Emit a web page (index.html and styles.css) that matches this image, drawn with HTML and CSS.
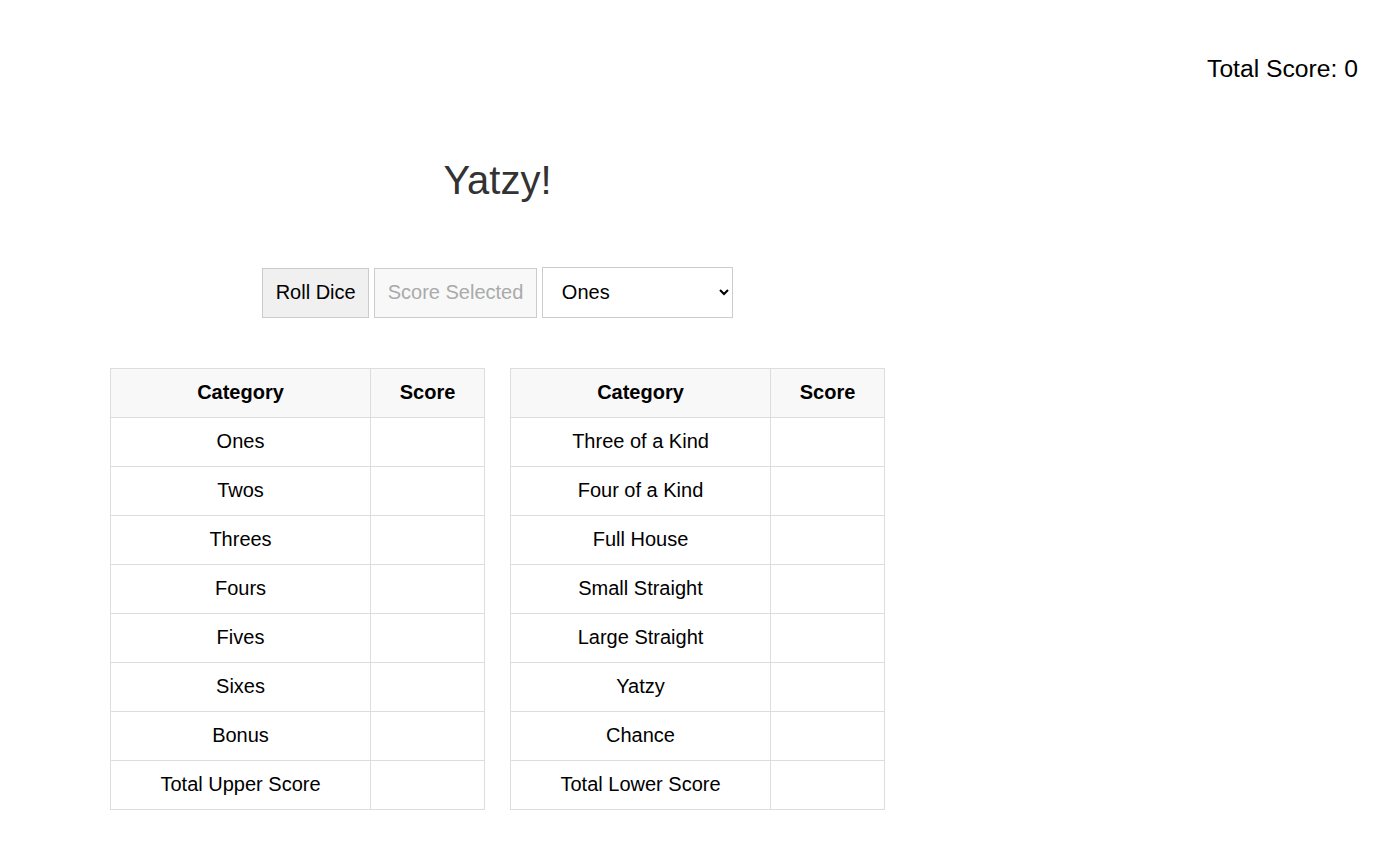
FILE: index.html
```html
<!DOCTYPE html>
<html>
<head>
<meta charset="utf-8">
<link rel="stylesheet" href="styles.css">
</head>
<body>
<div class="page">
  <main class="main">
    <h1 class="title">Yatzy!</h1>
    <div class="controls">
      <button class="btn">Roll Dice</button>
      <button class="btn" disabled>Score Selected</button>
      <select class="pick">
        <option>Ones</option>
        <option>Twos</option>
        <option>Threes</option>
        <option>Fours</option>
        <option>Fives</option>
        <option>Sixes</option>
      </select>
    </div>
    <div class="tables">
      <table class="score">
        <thead><tr><th class="cat">Category</th><th class="val">Score</th></tr></thead>
        <tbody>
          <tr><td>Ones</td><td></td></tr>
          <tr><td>Twos</td><td></td></tr>
          <tr><td>Threes</td><td></td></tr>
          <tr><td>Fours</td><td></td></tr>
          <tr><td>Fives</td><td></td></tr>
          <tr><td>Sixes</td><td></td></tr>
          <tr><td>Bonus</td><td></td></tr>
          <tr><td>Total Upper Score</td><td></td></tr>
        </tbody>
      </table>
      <table class="score">
        <thead><tr><th class="cat">Category</th><th class="val">Score</th></tr></thead>
        <tbody>
          <tr><td>Three of a Kind</td><td></td></tr>
          <tr><td>Four of a Kind</td><td></td></tr>
          <tr><td>Full House</td><td></td></tr>
          <tr><td>Small Straight</td><td></td></tr>
          <tr><td>Large Straight</td><td></td></tr>
          <tr><td>Yatzy</td><td></td></tr>
          <tr><td>Chance</td><td></td></tr>
          <tr><td>Total Lower Score</td><td></td></tr>
        </tbody>
      </table>
    </div>
  </main>
  <aside class="side">Total Score: 0</aside>
</div>
</body>
</html>
```
FILE: styles.css
```css
html, body {
  margin: 0;
  padding: 0;
  background: #fff;
  font-family: "Liberation Sans", Arial, sans-serif;
  color: #000;
}
.page {
  display: flex;
}
.main {
  width: 995px;
  display: flex;
  flex-direction: column;
  align-items: center;
}
.title {
  margin: 155px 0 0;
  font-size: 40px;
  font-weight: normal;
  color: #333;
  line-height: 50px;
}
.controls {
  display: flex;
  align-items: center;
  gap: 5px;
  margin-top: 62px;
}
.btn {
  font-family: inherit;
  font-size: 20px;
  height: 50px;
  padding: 0 12.5px;
  border: 1px solid #ccc;
  background: #f0f0f0;
  color: #000;
  border-radius: 0;
}
.btn:disabled {
  background: #f8f8f8;
  color: #aaa;
  border-color: #ccc;
}
.pick {
  font-family: inherit;
  font-size: 20px;
  width: 191px;
  height: 51px;
  padding: 0 15px 1px;
  border: 1px solid #ccc;
  border-radius: 0;
  background: #fff;
  color: #000;
}
.tables {
  display: flex;
  gap: 25px;
  margin-top: 50px;
}
.score {
  border-collapse: collapse;
  width: 375px;
  font-size: 20px;
}
.score th, .score td {
  border: 1px solid #ddd;
  height: 46px;
  padding: 0 0 2px;
  text-align: center;
}
.score th {
  background: #f8f8f8;
  font-weight: bold;
}
.score .cat {
  width: 259px;
}
.side {
  flex: 1;
  text-align: right;
  padding: 55px 30px 0 0;
  font-size: 24.7px;
  color: #000;
}
```
